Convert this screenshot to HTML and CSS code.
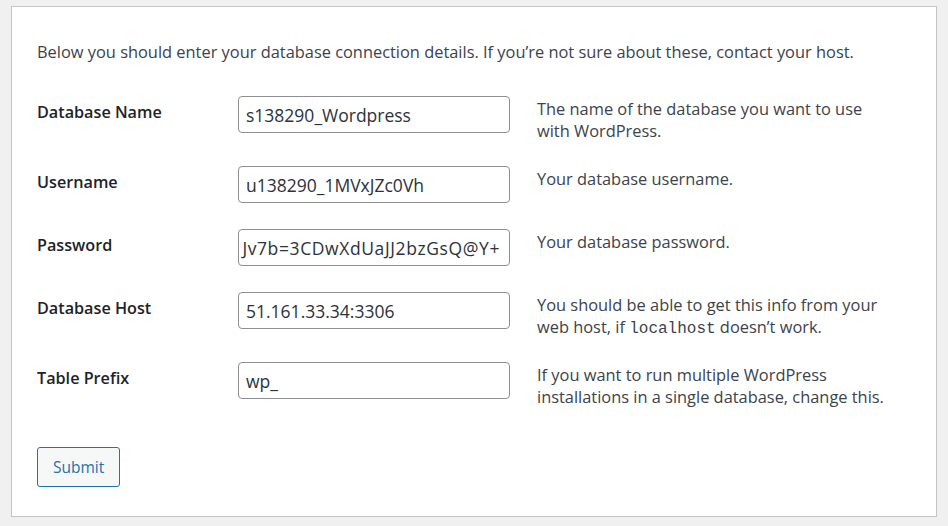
FILE: index.html
```html
<!DOCTYPE html>
<html lang="en">
<head>
<meta charset="utf-8">
<title>WordPress › Setup Configuration File</title>
<link rel="stylesheet" href="styles.css">
</head>
<body>
<div class="card">
  <p class="intro">Below you should enter your database connection details. If you’re not sure about these, contact your host.</p>
  <form class="form-table">
    <div class="row">
      <label class="label" for="dbname">Database Name</label>
      <input class="field" id="dbname" type="text" value="s138290_Wordpress">
      <div class="desc">The name of the database you want to use with WordPress.</div>
    </div>
    <div class="row">
      <label class="label" for="uname">Username</label>
      <input class="field" id="uname" type="text" value="u138290_1MVxJZc0Vh">
      <div class="desc">Your database username.</div>
    </div>
    <div class="row">
      <label class="label">Password</label>
      <div class="field field-scrolled"><span>Jv7b=3CDwXdUaJJ2bzGsQ@Y+</span></div>
      <div class="desc">Your database password.</div>
    </div>
    <div class="row">
      <label class="label" for="dbhost">Database Host</label>
      <input class="field" id="dbhost" type="text" value="51.161.33.34:3306">
      <div class="desc">You should be able to get this info from your web host, if <code>localhost</code> doesn’t work.</div>
    </div>
    <div class="row">
      <label class="label" for="prefix">Table Prefix</label>
      <input class="field" id="prefix" type="text" value="wp_">
      <div class="desc">If you want to run multiple WordPress installations in a single database, change this.</div>
    </div>
    <div class="actions">
      <button class="button" type="button">Submit</button>
    </div>
  </form>
</div>
</body>
</html>
```
FILE: styles.css
```css
html, body {
  margin: 0;
  padding: 0;
}
body {
  background: #f0f0f1;
  font-family: "Open Sans", "Noto Sans", sans-serif;
  font-size: 16.4px;
  color: #3c434a;
  padding: 6px 11px 9px;
}
.card {
  background: #fff;
  border: 1px solid #c3c4c7;
  padding: 34px 25px 30px;
  box-sizing: border-box;
  height: 511px;
}
.intro {
  margin: 0 0 20px;
  line-height: 22px;
}
.form-table {
  display: flex;
  flex-direction: column;
}
.row {
  display: grid;
  grid-template-columns: 174px 272px 356px;
  column-gap: 27px;
  align-items: start;
  padding: 13px 0 13px;
}
.label {
  font-size: 16.2px;
  font-weight: 600;
  color: #1d2327;
  line-height: 22px;
  padding-top: 5px;
}
.field {
  box-sizing: border-box;
  width: 272px;
  height: 37px;
  margin: 0;
  padding: 0 7px;
  border: 1px solid #8c8f94;
  border-radius: 4px;
  background: #fff;
  color: #2c3338;
  font-family: inherit;
  font-size: 17.5px;
}
.field-scrolled {
  display: flex;
  align-items: center;
  justify-content: flex-end;
  overflow: hidden;
  white-space: nowrap;
  padding: 0 9px 0 0;
}
.field-scrolled span {
  flex-shrink: 0;
  letter-spacing: 0.6px;
}
.desc {
  line-height: 22px;
  margin-top: 2px;
  margin-bottom: -2px;
}
code {
  font-family: "Liberation Mono", "DejaVu Sans Mono", monospace;
  font-size: 16px;
  line-height: 1;
}
.actions {
  padding-top: 28px;
}
.button {
  box-sizing: border-box;
  height: 40px;
  padding: 0 15px;
  border: 1px solid #2271b1;
  border-radius: 3px;
  background: #f6f7f7;
  color: #2271b1;
  font-family: inherit;
  font-size: 15.5px;
  cursor: pointer;
}
```
